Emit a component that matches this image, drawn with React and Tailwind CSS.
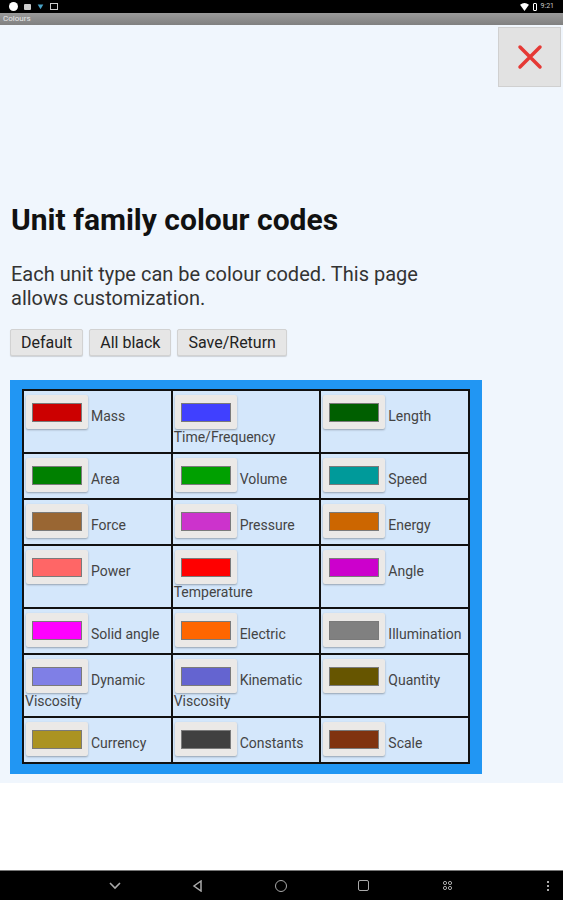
import React from "react";

const items = [
  { c: "#cc0000", a: "Mass" },
  { c: "#4040ff", a: "", b: "Time/Frequency" },
  { c: "#005f00", a: "Length" },
  { c: "#008000", a: "Area" },
  { c: "#00a000", a: "Volume" },
  { c: "#009a9a", a: "Speed" },
  { c: "#996633", a: "Force" },
  { c: "#cc33cc", a: "Pressure" },
  { c: "#cc6600", a: "Energy" },
  { c: "#ff6666", a: "Power" },
  { c: "#ff0000", a: "", b: "Temperature" },
  { c: "#cc00cc", a: "Angle" },
  { c: "#ff00ff", a: "Solid angle" },
  { c: "#ff6600", a: "Electric" },
  { c: "#808080", a: "Illumination" },
  { c: "#7f7fe6", a: "Dynamic", b: "Viscosity" },
  { c: "#6464d0", a: "Kinematic", b: "Viscosity" },
  { c: "#665500", a: "Quantity" },
  { c: "#ab9322", a: "Currency" },
  { c: "#404040", a: "Constants" },
  { c: "#80330f", a: "Scale" },
];

function Cell({ c, a, b }) {
  return (
    <div className="bg-[#d4e7fb] px-[2px] pt-[4px] pb-[6px]">
      <div className="flex items-center">
        <div className="w-[62px] h-[34px] bg-[#ebe9e7] rounded-[2px] shadow-[0_1px_2px_rgba(0,0,0,0.3)] flex items-center justify-center shrink-0">
          <div
            className="w-[50px] h-[19px] border border-[#7a7a7a]"
            style={{ backgroundColor: c }}
          />
        </div>
        <span className="ml-[3px] pt-[8px] text-[14px] text-[#444] leading-[18px] whitespace-nowrap">{a}</span>
      </div>
      {b && (
        <div className="text-[14px] text-[#444] leading-[18px] -ml-[1px] mt-[-1px]">{b}</div>
      )}
    </div>
  );
}

export default function App() {
  return (
    <div
      className="w-[563px] h-[900px] flex flex-col bg-white overflow-hidden"
      style={{ fontFamily: "Roboto, 'Noto Sans', sans-serif" }}
    >
      {/* status bar */}
      <div className="h-[13px] bg-black flex items-center justify-between px-[9px] shrink-0">
        <div className="flex items-center gap-[6px]">
          <div className="w-[9px] h-[9px] rounded-full bg-white" />
          <div className="w-[7px] h-[6px] bg-[#ccc] rounded-[1px]" />
          <svg width="7" height="7" viewBox="0 0 10 10"><path d="M1 2 L9 2 L5 9 Z" fill="#4aa3c7" /></svg>
          <div className="w-[8px] h-[7px] border border-[#ccc]" />
        </div>
        <div className="flex items-center gap-[4px]">
          <svg width="9" height="8" viewBox="0 0 10 9"><path d="M0 2 Q5 -2 10 2 L5 9 Z" fill="#fff" /></svg>
          <div className="w-[4px] h-[8px] border border-white rounded-[1px]" />
          <span className="text-[7px] text-[#ccc] leading-none">9:21</span>
        </div>
      </div>
      {/* title bar */}
      <div className="h-[12px] bg-gradient-to-b from-[#9a9a9a] to-[#808080] flex items-center px-[3px] shrink-0">
        <span className="text-[8px] text-[#e8e8e8] leading-none">Colours</span>
      </div>
      {/* content */}
      <div className="bg-[#f0f6fd] flex flex-col shrink-0">
        <div className="flex justify-end pt-[2px] pr-[2px]">
          <button className="w-[63px] h-[60px] bg-[#e2e2e2] border border-[#d0d0d0] flex items-center justify-center">
            <svg width="26" height="26" viewBox="0 0 26 26">
              <path d="M3 3 L23 23 M23 3 L3 23" stroke="#e53935" strokeWidth="3.5" strokeLinecap="round" />
            </svg>
          </button>
        </div>
        <h1 className="mt-[115px] ml-[11px] text-[30px] leading-[36px] font-bold text-[#111]">
          Unit family colour codes
        </h1>
        <p className="mt-[24px] ml-[11px] text-[20px] leading-[24px] text-[#333]">
          Each unit type can be colour coded. This page
          <br />
          allows customization.
        </p>
        <div className="flex gap-[6px] ml-[10px] mt-[19px]">
          <button className="h-[27px] px-[10px] bg-[#e6e6e6] border border-[#d2d2d2] rounded-[2px] text-[16px] text-[#222] shadow-[0_1px_1px_rgba(0,0,0,0.15)]">Default</button>
          <button className="h-[27px] px-[10px] bg-[#e6e6e6] border border-[#d2d2d2] rounded-[2px] text-[16px] text-[#222] shadow-[0_1px_1px_rgba(0,0,0,0.15)]">All black</button>
          <button className="h-[27px] px-[10px] bg-[#e6e6e6] border border-[#d2d2d2] rounded-[2px] text-[16px] text-[#222] shadow-[0_1px_1px_rgba(0,0,0,0.15)]">Save/Return</button>
        </div>
        <div className="ml-[10px] mt-[24px] mb-[9px] w-[472px] bg-[#2196f3] pt-[9px] pb-[10px] px-[12px]">
          <div className="grid grid-cols-3 gap-[2px] bg-[#111] p-[2px]">
            {items.map((it, i) => (
              <Cell key={i} {...it} />
            ))}
          </div>
        </div>
      </div>
      <div className="flex-1 bg-white" />
      {/* nav bar */}
      <div className="h-[30px] bg-black border-t border-[#777] flex items-center relative shrink-0">
        <svg className="absolute left-[109px]" width="12" height="8" viewBox="0 0 12 8"><path d="M1 1 L6 6 L11 1" stroke="#aaa" strokeWidth="1.6" fill="none" /></svg>
        <svg className="absolute left-[192px]" width="11" height="12" viewBox="0 0 11 12"><path d="M9 1 L2 6 L9 11 Z" stroke="#aaa" strokeWidth="1.5" fill="none" /></svg>
        <div className="absolute left-[275px] w-[12px] h-[12px] rounded-full border-[1.5px] border-[#aaa]" />
        <div className="absolute left-[358px] w-[11px] h-[11px] rounded-[2px] border-[1.5px] border-[#aaa]" />
        <svg className="absolute left-[442px]" width="11" height="11" viewBox="0 0 11 11">
          <circle cx="3" cy="3" r="1.6" stroke="#aaa" fill="none" />
          <circle cx="8" cy="3" r="1.6" stroke="#aaa" fill="none" />
          <circle cx="3" cy="8" r="1.6" stroke="#aaa" fill="none" />
          <circle cx="8" cy="8" r="1.6" stroke="#aaa" fill="none" />
        </svg>
        <div className="absolute left-[547px] flex flex-col gap-[2px]">
          <div className="w-[2px] h-[2px] bg-[#aaa]" />
          <div className="w-[2px] h-[2px] bg-[#aaa]" />
          <div className="w-[2px] h-[2px] bg-[#aaa]" />
        </div>
      </div>
    </div>
  );
}
